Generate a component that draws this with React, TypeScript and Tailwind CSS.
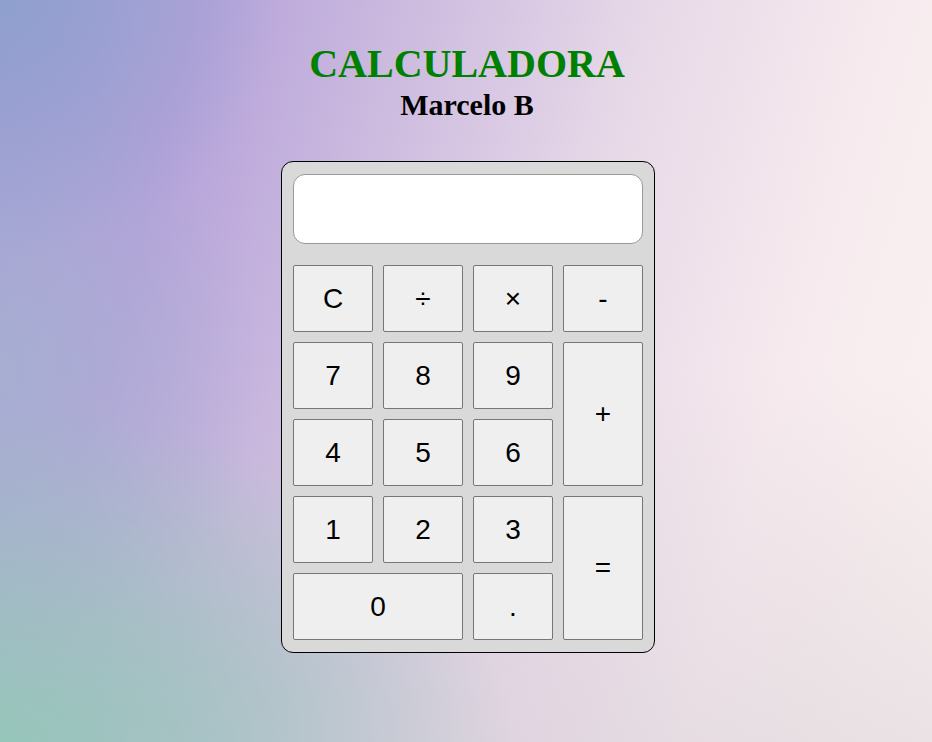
import { useState } from 'react'

type Key = {
  label: string
  span?: string
}

const keys: Key[] = [
  { label: 'C' },
  { label: '÷' },
  { label: '×' },
  { label: '-' },
  { label: '7' },
  { label: '8' },
  { label: '9' },
  { label: '+', span: 'row-span-2' },
  { label: '4' },
  { label: '5' },
  { label: '6' },
  { label: '1' },
  { label: '2' },
  { label: '3' },
  { label: '=', span: 'row-span-2' },
  { label: '0', span: 'col-span-2' },
  { label: '.' },
]

export default function App() {
  const [display, setDisplay] = useState('')

  const press = (k: string) => {
    if (k === 'C') return setDisplay('')
    if (k === '=') {
      try {
        const expr = display.replace(/÷/g, '/').replace(/×/g, '*')
        // eslint-disable-next-line no-new-func
        const result = Function(`return (${expr})`)()
        setDisplay(String(result))
      } catch {
        setDisplay('Erro')
      }
      return
    }
    setDisplay((d) => d + k)
  }

  return (
    <div className="min-h-screen w-full bg-[radial-gradient(ellipse_55%_45%_at_0%_100%,rgba(150,198,186,1)_0%,rgba(150,198,186,0.6)_45%,rgba(150,198,186,0)_100%),radial-gradient(ellipse_30%_35%_at_0%_0%,rgba(140,160,205,0.9)_0%,rgba(140,160,205,0)_100%),radial-gradient(ellipse_28%_40%_at_0%_50%,rgba(165,178,208,0.8)_0%,rgba(165,178,208,0)_100%),linear-gradient(to_bottom,rgba(255,255,255,0)_50%,rgba(200,195,205,0.35)_100%),linear-gradient(105deg,#a49ed6_0%,#b5a2da_18%,#cfbde0_38%,#e8d9e8_58%,#f6eaee_78%,#fcf3f1_100%)] pt-[41px] flex flex-col items-center font-['Liberation_Serif',serif]">
      <h1 className="text-[40px] leading-[46px] font-bold text-[#008000] ml-[2px]">CALCULADORA</h1>
      <h2 className="text-[30px] leading-[35px] font-bold text-black ml-[2px]">Marcelo B</h2>

      <div className="mt-[39px] ml-[4px] w-[374px] rounded-[12px] border border-black bg-[#d9d9d9] p-[11px] pt-[12px] pb-[12px]">
        <div className="h-[70px] w-full rounded-[12px] border border-[#999999] bg-white px-3 flex items-center justify-end font-['Liberation_Sans',sans-serif] text-[28px] text-black overflow-hidden">
          {display}
        </div>

        <div className="mt-[21px] grid grid-cols-4 auto-rows-[67px] gap-[10px]">
          {keys.map((k) => (
            <button
              key={k.label}
              onClick={() => press(k.label)}
              className={`${k.span ?? ''} flex items-center justify-center rounded-[2px] border border-[#767676] bg-[#efefef] font-['Liberation_Sans',sans-serif] text-[28px] text-black hover:bg-[#e5e5e5]`}
            >
              {k.label}
            </button>
          ))}
        </div>
      </div>
    </div>
  )
}
